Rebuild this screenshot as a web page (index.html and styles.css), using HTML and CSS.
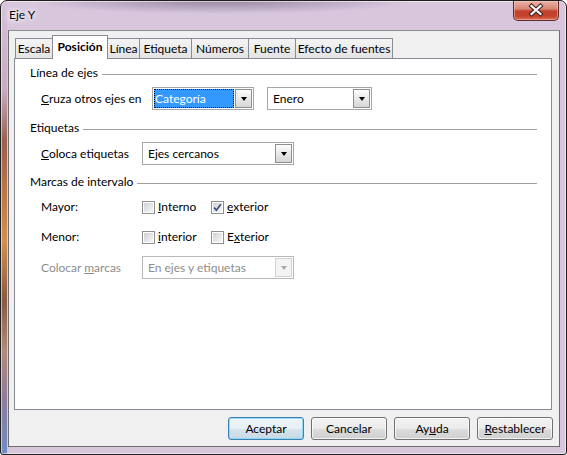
FILE: index.html
```html
<!DOCTYPE html>
<html lang="es">
<head>
<meta charset="utf-8">
<title>Eje Y</title>
<link rel="stylesheet" href="styles.css">
</head>
<body>
<div class="window">
  <div class="titlebar">
    <span class="title">Eje Y</span>
    <div class="close">
      <svg width="44" height="19" viewBox="0 0 44 19">
        <path d="M17.5 5 L26.5 13 M26.5 5 L17.5 13" stroke="#3a2020" stroke-width="4.2" stroke-linecap="square" fill="none"/>
        <path d="M17.5 5 L26.5 13 M26.5 5 L17.5 13" stroke="#ffffff" stroke-width="2.2" stroke-linecap="square" fill="none"/>
      </svg>
    </div>
  </div>
  <div class="client">
    <div class="tabs">
      <div class="tab w-escala">Escala</div>
      <div class="tab active w-posicion">Posición</div>
      <div class="tab w-linea">Línea</div>
      <div class="tab w-etiqueta">Etiqueta</div>
      <div class="tab w-numeros">Números</div>
      <div class="tab w-fuente">Fuente</div>
      <div class="tab w-efecto">Efecto de fuentes</div>
    </div>
    <div class="panel">
      <div class="head">Línea de ejes</div>
      <div class="row combo-row first">
        <span class="label w-cruza"><u>C</u>ruza otros ejes en</span>
        <div class="combo w-cat focused"><span class="sel">Categoría</span><span class="arrow"></span></div>
        <div class="combo w-enero"><span class="val">Enero</span><span class="arrow"></span></div>
      </div>

      <div class="head h2">Etiquetas</div>
      <div class="row combo-row first">
        <span class="label"><u>C</u>oloca etiquetas</span>
        <div class="combo w-wide"><span class="val">Ejes cercanos</span><span class="arrow"></span></div>
      </div>

      <div class="head h3">Marcas de intervalo</div>
      <div class="row check-row mayor">
        <span class="label">Mayor:</span>
        <span class="chk"><span class="box"></span><span><u>I</u>nterno</span></span>
        <span class="chk"><span class="box checked"><svg width="11" height="11" viewBox="0 0 11 11"><path d="M2.2 5.6 L4.4 8.2 L8.8 2.2" stroke="#3b4c87" stroke-width="1.7" fill="none"/></svg></span><span><u>e</u>xterior</span></span>
      </div>
      <div class="row check-row menor">
        <span class="label">Menor:</span>
        <span class="chk"><span class="box"></span><span><u>i</u>nterior</span></span>
        <span class="chk"><span class="box"></span><span>E<u>x</u>terior</span></span>
      </div>
      <div class="row combo-row colocar">
        <span class="label disabled">Colocar <u>m</u>arcas</span>
        <div class="combo w-wide disabled"><span class="val">En ejes y etiquetas</span><span class="arrow"></span></div>
      </div>
    </div>
    <div class="buttons">
      <div class="btn default">Aceptar</div>
      <div class="btn">Cancelar</div>
      <div class="btn">Ay<u>u</u>da</div>
      <div class="btn"><u>R</u>establecer</div>
    </div>
  </div>
</div>
</body>
</html>
```
FILE: styles.css
```css
* { box-sizing: border-box; }
html, body { margin: 0; padding: 0; }
body {
  width: 567px;
  height: 455px;
  overflow: hidden;
  font-family: Lato, "Noto Sans", sans-serif;
  font-size: 12px;
  line-height: 16px;
  color: #000;
  background: #ffffff;
}

/* ---------- window frame ---------- */
.window {
  width: 567px;
  height: 455px;
  border: 1px solid #1e1e1e;
  border-radius: 7px 7px 3px 3px;
  padding: 0 6px 7px 7px;
  display: flex;
  flex-direction: column;
  background:
    radial-gradient(ellipse 190px 13px at 220px 0px, rgba(95, 85, 110, 0.55), rgba(95, 85, 110, 0) 100%),
    linear-gradient(to bottom, #d6c3da 0px, #c9a9c0 90px, #9a6050 140px, #c07a45 200px, #d0904e 240px, #8a5a42 300px, #b38a78 350px, #8f7aa0 400px, #6f8cc0 450px) left top / 6px 100% no-repeat,
    #d8c6dd;
  box-shadow: inset 0 0 0 1px rgba(255, 255, 255, 0.55);
}

.titlebar {
  height: 29px;
  margin: 0 -6px 0 -7px;
  padding: 0 7px 0 8px;
  display: flex;
  align-items: flex-start;
}
.title {
  margin-top: 6px;
  line-height: 16px;
  color: #000;
  text-shadow: 0 0 6px #fff, 0 0 3px #fff, 0 0 10px rgba(255, 255, 255, 0.9);
}
.close {
  margin-left: auto;
  width: 46px;
  height: 20px;
  border: 1px solid #5a2c2c;
  border-top: none;
  border-radius: 0 0 5px 5px;
  background: linear-gradient(to bottom, #eab1a5 0%, #d98676 42%, #c4432e 52%, #c3422c 78%, #dc6a4c 100%);
  box-shadow: inset 0 0 0 1px rgba(255, 220, 210, 0.45);
  display: flex;
  align-items: center;
  justify-content: center;
}
.close svg { display: block; }

/* ---------- client area ---------- */
.client {
  flex: 1;
  border: 1px solid #6c6c6c;
  border-top-color: #8e8e8e;
  background: #f0f0f0;
  padding: 4px 7px 6px 5px;
  display: flex;
  flex-direction: column;
}

.tabs {
  display: flex;
  align-items: flex-end;
  height: 24px;
  margin-bottom: -1px;
  padding-left: 1px;
  position: relative;
  z-index: 1;
}
.tab {
  height: 20px;
  margin-bottom: 1px;
  margin-left: -1px;
  border: 1px solid #898c95;
  border-bottom: none;
  background: linear-gradient(to bottom, #f4f4f4, #e3e3e3);
  text-align: center;
  padding-top: 2px;
  white-space: nowrap;
}
.tab:first-child { margin-left: 0; }
.tab.active {
  height: 24px;
  margin-bottom: 0;
  background: #fff;
  font-weight: bold;
  padding-top: 3px;
  position: relative;
  z-index: 2;
}
.w-escala { width: 38px; }
.w-posicion { width: 56px; }
.w-linea { width: 33px; }
.w-etiqueta { width: 53px; }
.w-numeros { width: 58px; }
.w-fuente { width: 48px; }
.w-efecto { width: 98px; }

.panel {
  height: 352px;
  background: #fff;
  border: 1px solid #898c95;
  padding-top: 6px;
}

.head {
  display: flex;
  align-items: center;
  height: 16px;
  margin: 0 14px 0 15px;
}
.head::after {
  content: "";
  flex: 1;
  height: 1px;
  margin-left: 4px;
  margin-top: 3px;
  background: #a0a0a0;
}
.head.h2 { margin-top: 10px; }
.head.h3 { margin-top: 9px; }

.row {
  display: flex;
  align-items: center;
  padding-left: 26px;
}
.combo-row { height: 23px; }
.combo-row.first { margin-top: 6px; }
.check-row { height: 16px; }
.check-row.mayor { margin-top: 9px; }
.check-row.menor { margin-top: 14px; }
.combo-row.colocar { margin-top: 11px; }

.label { width: 101px; flex: none; white-space: nowrap; }
.label.w-cruza { width: 111px; }
.label.disabled { color: #8d8d8d; }

/* ---------- combo boxes ---------- */
.combo {
  height: 23px;
  border: 1px solid #a6a6a6;
  background: #fff;
  display: flex;
  align-items: stretch;
  padding: 1px;
  flex: none;
}
.w-cat { width: 102px; }
.w-enero { width: 105px; margin-left: 13px; }
.w-wide { width: 152px; }

.combo .val {
  flex: 1;
  padding-left: 4px;
  line-height: 19px;
  white-space: nowrap;
  overflow: hidden;
}
.combo .sel {
  flex: 1;
  margin-right: 1px;
  border: 1px dotted #000;
  background: #3399ff;
  color: #fff;
  line-height: 17px;
  padding-left: 0;
  white-space: nowrap;
}
.combo .arrow {
  width: 17px;
  flex: none;
  border: 1px solid #8f8f8f;
  background: linear-gradient(to bottom, #fdfdfd, #e9e9e9 50%, #d6d6d6);
  display: flex;
  align-items: center;
  justify-content: center;
}
.combo .arrow::before {
  content: "";
  width: 0;
  height: 0;
  border-left: 3.5px solid transparent;
  border-right: 3.5px solid transparent;
  border-top: 4px solid #000;
  margin-top: 1px;
}
.combo.disabled { border-color: #b9b9b9; }
.combo.disabled .val { color: #8d8d8d; }
.combo.disabled .arrow {
  border-color: #d2d2d2;
  background: #f4f4f4;
}
.combo.disabled .arrow::before { border-top-color: #a8a8a8; }

/* ---------- check boxes ---------- */
.chk {
  display: flex;
  align-items: center;
  gap: 3px;
  width: 69px;
  flex: none;
  white-space: nowrap;
}
.box {
  width: 13px;
  height: 13px;
  flex: none;
  border: 1px solid #8e8f8f;
  padding: 1px;
  background: linear-gradient(135deg, #cfd1d4, #f7f7f7) content-box, #fff;
  display: flex;
  align-items: center;
  justify-content: center;
}
.box svg { display: block; margin: -1px; }

/* ---------- buttons ---------- */
.buttons {
  display: flex;
  justify-content: flex-end;
  gap: 7px;
  margin-top: 7px;
  margin-right: -1px;
}
.btn {
  width: 76px;
  height: 23px;
  border: 1px solid #707070;
  border-radius: 3px;
  background: linear-gradient(to bottom, #f2f2f2 0%, #ebebeb 50%, #dddddd 50%, #cfcfcf 100%);
  box-shadow: inset 0 0 0 1px rgba(255, 255, 255, 0.75);
  text-align: center;
  line-height: 21px;
  white-space: nowrap;
}
.btn.default {
  border-color: #3c7fb1;
  background: linear-gradient(to bottom, #eef5fa 0%, #e6eff5 50%, #d5e3ec 50%, #c9dae5 100%);
  box-shadow: inset 0 0 0 1px rgba(120, 215, 245, 0.75);
}
```
